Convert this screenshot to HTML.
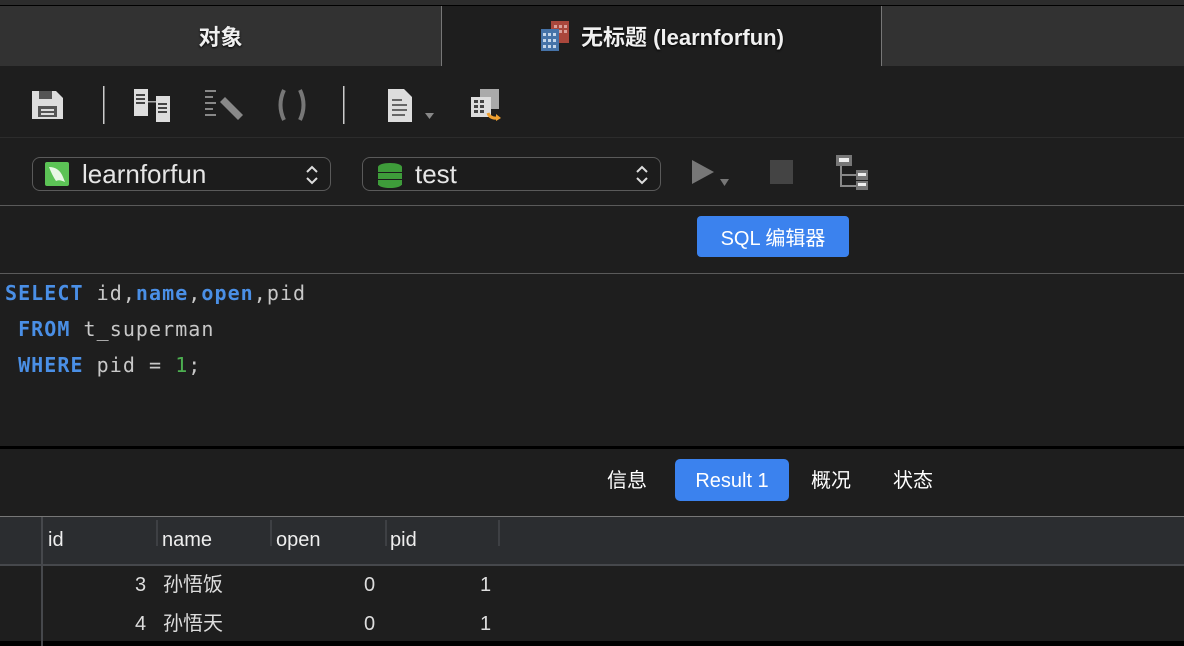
<!DOCTYPE html>
<html><head><meta charset="utf-8"><style>
*{margin:0;padding:0;box-sizing:border-box}
body{width:1184px;height:646px;background:#1e1e1e;position:relative;overflow:hidden;font-family:"Liberation Sans","Noto Sans CJK SC",sans-serif;color:#e8e8e8}
.abs{position:absolute}
.tab{position:absolute;top:6px;height:60px;display:flex;align-items:center;justify-content:center;font-size:22px;font-weight:bold;color:#f0f0f0;text-shadow:0 1px 2px #000}
.code{position:absolute;left:5px;font-family:"DejaVu Sans Mono","Liberation Mono",monospace;font-size:20px;letter-spacing:1.05px;color:#c8c8c8;line-height:24px}
.kw{color:#4a8fe6;font-weight:bold}
.sel{position:absolute;top:157px;height:34px;border:1.5px solid #5a5a5a;border-radius:8px;background:#1c1c1c;font-size:26px;color:#e6e6e6}
.sel span.t{position:absolute;top:0;line-height:33px}
.hd{position:absolute;top:527px;font-size:20px;color:#eee;line-height:26px}
.cs{position:absolute;top:520px;width:2px;height:26px;background:#3e4044}
.cell{position:absolute;font-size:20px;color:#ddd;height:28px;line-height:28px}
.rt{position:absolute;top:459px;height:42px;line-height:45px;font-size:20px;color:#fff}
</style></head><body>
<div class="abs" style="left:0;top:0;width:1184px;height:5px;background:#2c2c2c"></div>
<div class="abs" style="left:0;top:5px;width:1184px;height:1px;background:#000"></div>
<div class="tab" style="left:0;width:441px;background:#323232">对象</div>
<div class="abs" style="left:441px;top:6px;width:1px;height:60px;background:#777"></div>
<div class="tab" style="left:442px;width:439px;background:#1e1e1e">
<svg width="34" height="34" viewBox="0 0 34 34" style="margin-right:8px"><rect x="12" y="2" width="18" height="22" fill="#a9473c"/><g fill="#d9a09a"><rect x="15" y="6" width="3" height="3"/><rect x="20" y="6" width="3" height="3"/><rect x="25" y="6" width="3" height="3"/><rect x="20" y="11" width="3" height="3"/><rect x="25" y="11" width="3" height="3"/></g><rect x="2" y="10" width="18" height="22" fill="#4673a8"/><g fill="#c5d6ea"><rect x="4" y="14" width="3" height="3"/><rect x="9" y="14" width="3" height="3"/><rect x="14" y="14" width="3" height="3"/><rect x="4" y="20" width="3" height="3"/><rect x="9" y="20" width="3" height="3"/><rect x="14" y="20" width="3" height="3"/><rect x="4" y="26" width="3" height="3"/><rect x="9" y="26" width="3" height="3"/><rect x="14" y="26" width="3" height="3"/></g></svg>无标题 (learnforfun)</div>
<div class="abs" style="left:881px;top:6px;width:1px;height:60px;background:#777"></div>
<div class="abs" style="left:882px;top:6px;width:302px;height:60px;background:#323232"></div>
<svg class="abs" style="left:30px;top:85px" width="480" height="42" viewBox="0 0 480 42">
<path d="M2 6h24l7 7v21H2z" fill="#ddd"/><rect x="9" y="6" width="13" height="8" fill="#555"/><rect x="8" y="21" width="19" height="11" fill="#555"/><rect x="11" y="24" width="13" height="2" fill="#ddd"/><rect x="11" y="28" width="13" height="2" fill="#ddd"/>
<rect x="73" y="1" width="1.5" height="38" fill="#ccc"/>
<rect x="104" y="4" width="14" height="27" fill="#ddd"/><rect x="106" y="9" width="9" height="2" fill="#444"/><rect x="106" y="13" width="9" height="2" fill="#444"/><rect x="106" y="17" width="9" height="2" fill="#444"/><rect x="118" y="16" width="8" height="1.5" fill="#aaa"/><rect x="126" y="11" width="14" height="26" fill="#ddd"/><rect x="128" y="18" width="9" height="2" fill="#444"/><rect x="128" y="22" width="9" height="2" fill="#444"/><rect x="128" y="26" width="9" height="2" fill="#444"/>
<g fill="#888"><rect x="175" y="5" width="11" height="2"/><rect x="175" y="11" width="8" height="2"/><rect x="175" y="17" width="11" height="2"/><rect x="175" y="23" width="8" height="2"/><rect x="175" y="29" width="11" height="2"/></g><path d="M190 17l5-5 18 18-5 5z" fill="#888"/>
<path d="M254 5q-7 15 0 30M270 5q7 15 0 30" stroke="#777" stroke-width="4" fill="none"/>
<rect x="313" y="1" width="1.5" height="38" fill="#ccc"/>
<path d="M358 4h16l8 8v25h-24z" fill="#ddd"/><g fill="#666"><rect x="362" y="14" width="10" height="2"/><rect x="362" y="19" width="15" height="2"/><rect x="362" y="24" width="15" height="2"/><rect x="362" y="29" width="13" height="2"/></g><path d="M395 28h9l-4.5 6z" fill="#888"/>
<rect x="450" y="4" width="19" height="20" fill="#aaa"/><rect x="441" y="12" width="20" height="20" fill="#ddd"/><g fill="#444"><rect x="444" y="15" width="4" height="3"/><rect x="450" y="15" width="4" height="3"/><rect x="444" y="20" width="4" height="3"/><rect x="450" y="20" width="4" height="3"/><rect x="444" y="25" width="4" height="3"/><rect x="450" y="25" width="4" height="3"/></g><path d="M458 28q2 6 10 5" stroke="#f0a030" stroke-width="3" fill="none"/><path d="M466 29l5 4-5 3z" fill="#f0a030"/>
</svg>
<div class="abs" style="left:0;top:137px;width:1184px;height:1px;background:#2c2c2c"></div>
<div class="sel" style="left:32px;width:299px"><div class="abs" style="left:12px;top:4px;width:24px;height:24px;background:#5cc356;border-radius:2px"></div><svg class="abs" style="left:14px;top:6px" width="20" height="20"><path d="M2 3q10 0 14 10l2 5q-6-3-9-1q-4-6-7-14z" fill="#e8f7e6"/></svg><span class="t" style="left:49px">learnforfun</span><svg class="abs" style="left:272px;top:6px" width="14" height="22"><path d="M2 8l5-5 5 5M2 14l5 5 5-5" stroke="#ddd" stroke-width="2" fill="none"/></svg></div>
<div class="sel" style="left:362px;width:299px"><svg class="abs" style="left:14px;top:4px" width="26" height="26"><g fill="#3e9c3a"><ellipse cx="13" cy="5" rx="12" ry="4"/><rect x="1" y="5" width="24" height="5"/><rect x="1" y="11" width="24" height="6"/><rect x="1" y="18" width="24" height="5"/><ellipse cx="13" cy="22" rx="12" ry="4"/></g></svg><span class="t" style="left:52px">test</span><svg class="abs" style="left:272px;top:6px" width="14" height="22"><path d="M2 8l5-5 5 5M2 14l5 5 5-5" stroke="#ddd" stroke-width="2" fill="none"/></svg></div>
<svg class="abs" style="left:690px;top:155px" width="190" height="40"><path d="M2 5l22 12-22 12z" fill="#777"/><path d="M30 24h9l-4.5 7z" fill="#777"/><rect x="80" y="5" width="23" height="24" fill="#444"/><rect x="146" y="0" width="16" height="11" fill="#777"/><rect x="149" y="3" width="10" height="4" fill="#eee"/><path d="M151 11v20h16M151 20h16" stroke="#888" stroke-width="2" fill="none"/><rect x="166" y="15" width="12" height="10" fill="#777"/><rect x="168" y="18" width="8" height="3" fill="#eee"/><rect x="166" y="26" width="12" height="9" fill="#777"/><rect x="168" y="28" width="8" height="3" fill="#eee"/></svg>
<div class="abs" style="left:0;top:205px;width:1184px;height:1px;background:#5a5a5a"></div>
<div class="abs" style="left:697px;top:216px;width:152px;height:41px;background:#3b82ee;border-radius:4px;color:#fff;font-size:20px;text-align:center;line-height:46px">SQL 编辑器</div>
<div class="abs" style="left:0;top:273px;width:1184px;height:1px;background:#5a5a5a"></div>
<div class="code" style="top:281px"><span class="kw">SELECT</span> id,<span class="kw">name</span>,<span class="kw">open</span>,pid</div>
<div class="code" style="top:317px">&nbsp;<span class="kw">FROM</span> t_superman</div>
<div class="code" style="top:353px">&nbsp;<span class="kw">WHERE</span> pid = <span style="color:#4caf50">1</span>;</div>
<div class="abs" style="left:0;top:446px;width:1184px;height:3px;background:#000"></div>
<div class="rt" style="left:607px">信息</div>
<div class="rt" style="left:675px;width:114px;background:#3b82ee;border-radius:5px;text-align:center">Result 1</div>
<div class="rt" style="left:811px">概况</div>
<div class="rt" style="left:893px">状态</div>
<div class="abs" style="left:0;top:516px;width:1184px;height:1px;background:#777"></div>
<div class="abs" style="left:0;top:517px;width:1184px;height:47px;background:#2b2d30"></div>
<div class="abs" style="left:0;top:564px;width:1184px;height:2px;background:#46484c"></div>
<div class="abs" style="left:41px;top:517px;width:2px;height:129px;background:#46484c"></div>
<div class="cs" style="left:156px"></div><div class="cs" style="left:270px"></div><div class="cs" style="left:385px"></div><div class="cs" style="left:498px"></div>
<div class="hd" style="left:48px">id</div><div class="hd" style="left:162px">name</div><div class="hd" style="left:276px">open</div><div class="hd" style="left:390px">pid</div>
<div class="cell" style="left:135px;top:571px">3</div><div class="cell" style="left:163px;top:571px">孙悟饭</div><div class="cell" style="left:364px;top:571px">0</div><div class="cell" style="left:480px;top:571px">1</div>
<div class="cell" style="left:135px;top:610px">4</div><div class="cell" style="left:163px;top:610px">孙悟天</div><div class="cell" style="left:364px;top:610px">0</div><div class="cell" style="left:480px;top:610px">1</div>
<div class="abs" style="left:0;top:641px;width:1184px;height:5px;background:#000"></div>
<div class="abs" style="left:41px;top:641px;width:2px;height:5px;background:#46484c"></div>
</body></html>
